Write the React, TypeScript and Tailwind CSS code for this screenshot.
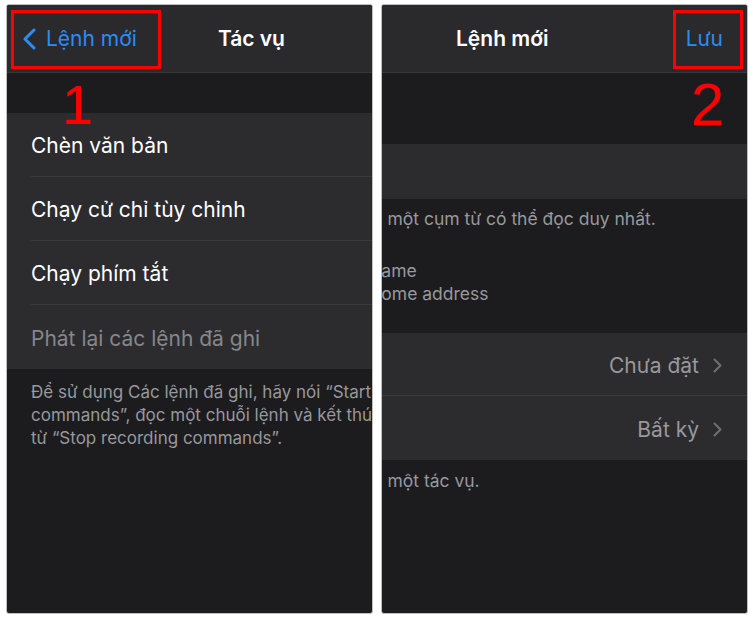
import React from 'react';

const font = { fontFamily: 'Inter, "Noto Sans", sans-serif' };

function BackChevron() {
  return (
    <svg width="14" height="22" viewBox="0 0 14 22" fill="none">
      <polyline points="12,2 3,11 12,20" stroke="#2d8cf5" strokeWidth="3" strokeLinecap="round" strokeLinejoin="round" />
    </svg>
  );
}

function RowChevron() {
  return (
    <svg width="9" height="15" viewBox="0 0 9 15" fill="none">
      <polyline points="1.5,1.5 7.5,7.5 1.5,13.5" stroke="#6e6e73" strokeWidth="2" strokeLinecap="round" strokeLinejoin="round" />
    </svg>
  );
}

// red annotation numbers drawn over the screenshot
function Marker({ n, className }: { n: string; className: string }) {
  return (
    <div
      className={`absolute text-[#ff0000] leading-none ${className}`}
      style={{ fontFamily: '"Liberation Sans", Arial, sans-serif' }}
    >
      {n}
    </div>
  );
}

function TasksScreen() {
  const rows = ['Chèn văn bản', 'Chạy cử chỉ tùy chỉnh', 'Chạy phím tắt'];

  return (
    <div className="relative w-[367px] h-[610px] shrink-0 overflow-hidden rounded-[3px] border border-[#bfbfbf] bg-[#1c1c1e] flex flex-col" style={font}>
      <div className="h-[68px] shrink-0 bg-[#2a2a2c] border-b border-[#37373a] flex items-center pl-[15px]">
        <BackChevron />
        <span className="ml-[10px] text-[21px] text-[#2d8cf5]">Lệnh mới</span>
        <span className="ml-[81px] text-[21px] font-semibold text-white">Tác vụ</span>
      </div>
      <div className="h-[40px] shrink-0" />
      <div className="bg-[#2c2c2e] flex flex-col">
        {rows.map((r) => (
          <div key={r} className="h-[64px] pl-[24px]">
            <div className="h-full border-b border-[#3a3a3c] flex items-center pt-[3px] text-[21px] text-white whitespace-nowrap">{r}</div>
          </div>
        ))}
        <div className="h-[64px] pl-[24px] flex items-center pt-[3px] text-[21px] text-[#86868b] whitespace-nowrap">Phát lại các lệnh đã ghi</div>
      </div>
      <div className="pl-[24px] pt-[12px] text-[17px] leading-[23px] text-[#98989d] whitespace-nowrap">
        <div>Để sử dụng Các lệnh đã ghi, hãy nói “Start recording</div>
        <div>commands”, đọc một chuỗi lệnh và kết thúc bằng cách nói cụm</div>
        <div>từ “Stop recording commands”.</div>
      </div>

      <div className="absolute left-[4px] top-[5px] w-[150px] h-[59px] border-[3px] border-[#ff0000]" />
      <Marker n="1" className="left-[55px] top-[72px] text-[56px]" />
    </div>
  );
}

function NewCommandScreen() {
  return (
    <div className="relative w-[367px] h-[610px] shrink-0 overflow-hidden rounded-[3px] border border-[#bfbfbf] bg-[#1c1c1e] flex flex-col" style={font}>
      <div className="h-[68px] shrink-0 bg-[#2a2a2c] border-b border-[#37373a] flex items-center">
        <span className="ml-[74px] text-[21px] font-semibold text-white">Lệnh mới</span>
        <span className="ml-auto mr-[24px] text-[21px] text-[#2d8cf5]">Lưu</span>
      </div>
      <div className="h-[71px] shrink-0" />
      <div className="h-[55px] shrink-0 bg-[#2c2c2e]" />
      <div className="text-[17.5px] text-[#98989d] whitespace-nowrap">
        <div className="pt-[8px] leading-[24px] -ml-[10px]">ó một cụm từ có thể đọc duy nhất.</div>
        <div className="mt-[28px] leading-[23px]">
          <div className="-ml-[11px]">name</div>
          <div className="-ml-[11px]">home address</div>
        </div>
      </div>
      <div className="mt-[28px] bg-[#2c2c2e] flex flex-col">
        <div className="h-[63px] border-b border-[#3a3a3c] flex items-center justify-end pt-[3px] pr-[25px] text-[21px] text-[#98989d]">
          <span>Chưa đặt</span>
          <span className="ml-[14px]"><RowChevron /></span>
        </div>
        <div className="h-[64px] flex items-center justify-end pt-[3px] pr-[25px] text-[21px] text-[#98989d]">
          <span>Bất kỳ</span>
          <span className="ml-[14px]"><RowChevron /></span>
        </div>
      </div>
      <div className="pt-[9px] leading-[24px] text-[17.5px] text-[#98989d] whitespace-nowrap -ml-[10px]">ó một tác vụ.</div>

      <div className="absolute left-[291px] top-[5px] w-[70px] h-[59px] border-[3px] border-[#ff0000]" />
      <Marker n="2" className="left-[309px] top-[70px] text-[60px]" />
    </div>
  );
}

export default function App() {
  return (
    <div className="w-[755px] h-[618px] bg-white flex gap-[8px] pl-[6px] pt-[4px]">
      <TasksScreen />
      <NewCommandScreen />
    </div>
  );
}
